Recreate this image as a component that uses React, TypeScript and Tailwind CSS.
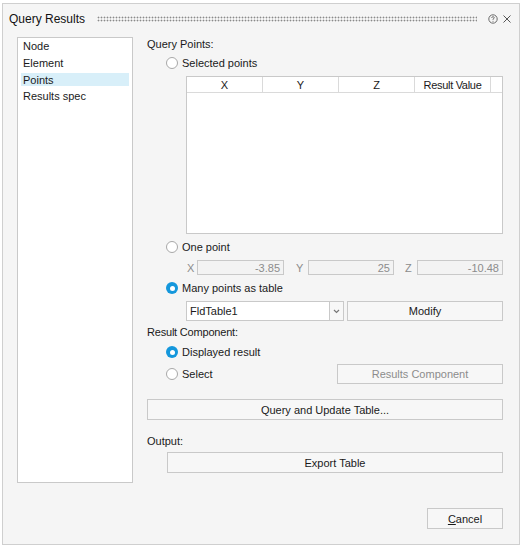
import React from 'react';

// ── Small pieces ──────────────────────────────────────────────

const Radio: React.FC<{ checked?: boolean; label: string }> = ({ checked = false, label }) => (
  <div className="flex items-center h-[14px] ml-[19px] gap-[4px]">
    {checked ? (
      <span className="w-[12px] h-[12px] rounded-full bg-[#1497dc] flex items-center justify-center">
        <span className="w-[5px] h-[5px] rounded-full bg-white" />
      </span>
    ) : (
      <span className="w-[12px] h-[12px] rounded-full border border-[#a8a8a8] bg-white" />
    )}
    <span>{label}</span>
  </div>
);

const Button: React.FC<{ className?: string; disabled?: boolean; children: React.ReactNode }> = ({
  className = '',
  disabled = false,
  children,
}) => (
  <div
    className={`flex items-center justify-center border border-[#c9c9c9] bg-[#f7f7f7] ${
      disabled ? 'text-[#8c8c8c]' : 'text-[#1a1a1a]'
    } ${className}`}
  >
    {children}
  </div>
);

const Field: React.FC<{ value: string; className?: string }> = ({ value, className = '' }) => (
  <div
    className={`h-full flex items-center justify-end pr-[3px] border border-[#c9c9c9] bg-[#f3f3f3] text-[#8c8c8c] ${className}`}
  >
    {value}
  </div>
);

const listItems = ['Node', 'Element', 'Points', 'Results spec'];

// ── Dialog ────────────────────────────────────────────────────

export default function App() {
  return (
    <div
      className="w-[531px] h-[551px] bg-white pt-[3px] pl-[2px] text-[11px] text-[#1a1a1a] leading-[14px]"
      style={{ fontFamily: '"Liberation Sans", Arial, sans-serif' }}
    >
      <div className="w-[518px] h-[542px] border border-[#cfcfcf] bg-[#f5f5f5] flex flex-col">
        {/* title bar */}
        <div className="h-[33px] flex items-start pt-[8px] pl-[6px]">
          <span className="text-[12px] leading-[15px] text-[#111]">Query Results</span>
          <div className="ml-[12px] mt-[4px] w-[380px] h-[6px] bg-[radial-gradient(circle,#8a8a8a_0.8px,transparent_1.1px)] bg-[length:3px_3px]" />
          <svg className="ml-[11px] mt-[2px]" width="10" height="10" viewBox="0 0 10 10">
            <circle cx="5" cy="5" r="4.2" fill="none" stroke="#6b6b6b" strokeWidth="1" />
            <path d="M3.7 4 Q3.7 2.7 5 2.7 Q6.3 2.7 6.3 3.8 Q6.3 4.5 5 5 L5 5.8" fill="none" stroke="#6b6b6b" strokeWidth="0.9" />
            <circle cx="5" cy="7.2" r="0.55" fill="#6b6b6b" />
          </svg>
          <svg className="ml-[5px] mt-[3px]" width="8" height="8" viewBox="0 0 8 8">
            <path d="M0.5 0.5 L7.5 7.5 M7.5 0.5 L0.5 7.5" stroke="#555" strokeWidth="1" />
          </svg>
        </div>

        {/* body */}
        <div className="flex pl-[14px]">
          {/* left nav list */}
          <div className="w-[116px] h-[446px] border border-[#c9c9c9] bg-white">
            {listItems.map((item) => (
              <div key={item} className="h-[16.7px] flex items-center px-[3px]">
                <div
                  className={`h-[13px] w-full flex items-center px-[2px] ${
                    item === 'Points' ? 'bg-[#d8eff9]' : ''
                  }`}
                >
                  {item}
                </div>
              </div>
            ))}
          </div>

          {/* right column */}
          <div className="ml-[14px] w-[356px] flex flex-col">
            <div className="h-[14px] flex items-center">Query Points:</div>
            <div className="mt-[5px]">
              <Radio label="Selected points" />
            </div>

            {/* table */}
            <div className="mt-[6px] ml-[39px] w-[317px] h-[158px] border border-[#c9c9c9] bg-white flex flex-col">
              <div className="h-[16px] flex border-b border-[#dadada]">
                <div className="w-[76px] flex items-center justify-center border-r border-[#dadada]">X</div>
                <div className="w-[76px] flex items-center justify-center border-r border-[#dadada]">Y</div>
                <div className="w-[76px] flex items-center justify-center border-r border-[#dadada]">Z</div>
                <div className="w-[76px] flex items-center justify-center border-r border-[#dadada] tracking-[-0.3px]">
                  Result Value
                </div>
                <div className="flex-1" />
              </div>
            </div>

            <div className="mt-[6px]">
              <Radio label="One point" />
            </div>

            {/* coordinate fields */}
            <div className="mt-[6px] h-[15px] ml-[39px] flex items-center text-[#8c8c8c]">
              <span className="w-[11px] pl-[1px]">X</span>
              <Field value="-3.85" className="w-[87px]" />
              <span className="w-[24px] pl-[12px]">Y</span>
              <Field value="25" className="w-[86px]" />
              <span className="w-[23px] pl-[11px]">Z</span>
              <Field value="-10.48" className="w-[86px]" />
            </div>

            <div className="mt-[6px]">
              <Radio checked label="Many points as table" />
            </div>

            {/* table selector */}
            <div className="mt-[6px] h-[20px] ml-[39px] flex">
              <div className="w-[144px] h-full flex items-center pl-[3px] border border-[#c9c9c9] bg-white">
                FldTable1
              </div>
              <div className="w-[14px] h-full flex items-center justify-center border border-l-0 border-[#c9c9c9] bg-[#f7f7f7]">
                <svg width="7" height="5" viewBox="0 0 7 5">
                  <path d="M1 1 L3.5 3.5 L6 1" fill="none" stroke="#777" strokeWidth="1.2" />
                </svg>
              </div>
              <Button className="ml-[3px] w-[156px] h-full">Modify</Button>
            </div>

            <div className="mt-[4px] h-[14px] flex items-center tracking-[-0.2px]">Result Component:</div>
            <div className="mt-[6px]">
              <Radio checked label="Displayed result" />
            </div>
            <div className="mt-[5px] h-[20px] flex items-center">
              <Radio label="Select" />
              <Button disabled className="ml-auto w-[166px] h-full">
                Results Component
              </Button>
            </div>

            <Button className="mt-[15px] h-[21px] w-full">Query and Update Table...</Button>

            <div className="mt-[14px] h-[14px] flex items-center">Output:</div>
            <Button className="mt-[4px] ml-[20px] h-[21px] w-[336px]">Export Table</Button>

            <Button className="mt-[35px] h-[21px] w-[76px] self-end">
              <span>
                <span className="underline">C</span>ancel
              </span>
            </Button>
          </div>
        </div>
      </div>
    </div>
  );
}
